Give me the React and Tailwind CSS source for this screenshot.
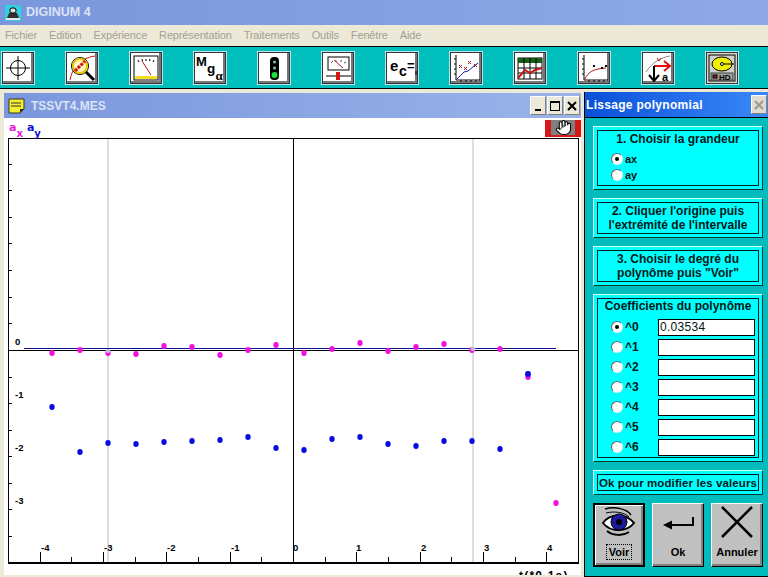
import React from 'react'
import { Hand } from 'lucide-react'

const menus = ['Fichier', 'Edition', 'Expérience', 'Représentation', 'Traitements', 'Outils', 'Fenêtre', 'Aide']

const magenta = [[52,353],[80,350],[108,353],[136,354],[164,346],[192,347],[220,355],[248,350],[276,345],[304,353],[332,349],[360,343],[388,351],[416,347],[444,344],[472,350],[500,349],[528,377],[556,503]]
const blue = [[52,407],[80,452],[108,443],[136,444],[164,442],[192,441],[220,440],[248,437],[276,448],[304,450],[332,439],[360,437],[388,444],[416,446],[444,441],[472,441],[500,449],[528,374]]
const majorX = [[40,'-4',41],[103,'-3',104],[166,'-2',167],[230,'-1',231],[293,'0',293],[356,'1',356],[420,'2',421],[483,'3',484],[546,'4',547]]
const minorX = [71,135,198,261,325,388,451,515]
const leftTicks = [164,190,217,243,270,297,323,350,377,403,430,456,483,509,536]
const leftLabels = [['0',15,345],['-1',15,398],['-2',15,451],['-3',15,504]]
const coefs = ['^0','^1','^2','^3','^4','^5','^6']

const IconTarget = () => (
  <svg width="28" height="28" viewBox="0 0 28 28" fill="none" stroke="#000" strokeWidth="1">
    <circle cx="14" cy="14" r="7.5" />
    <path d="M14 2v24M2 14h24" />
  </svg>
)

const IconLoupe = () => (
  <svg width="28" height="28" viewBox="0 0 28 28" fill="none">
    <path d="M2 26C4 14 12 4 27 2" stroke="#c01818" strokeWidth="1" />
    <circle cx="12" cy="12" r="8.5" stroke="#000" strokeWidth="1" fill="#fff8c0" />
    <circle cx="12" cy="12" r="7" stroke="#e8c800" strokeWidth="2" />
    <path d="M7 17L17 7" stroke="#d01818" strokeWidth="3" strokeDasharray="3 1" />
    <path d="M18 18l8 8" stroke="#000" strokeWidth="3" />
  </svg>
)

const IconMeter = () => (
  <svg width="28" height="28" viewBox="0 0 28 28" fill="none">
    <rect x="2" y="2" width="24" height="24" fill="#fff" stroke="#000" />
    <path d="M6 6l1 2M10 5l.5 2M14 5v2M18 5l-.5 2M22 6l-1 2" stroke="#000" />
    <path d="M10 7l9 14" stroke="#c01818" />
    <rect x="3" y="22" width="22" height="3" fill="#f0e020" />
  </svg>
)

const IconMg = () => (
  <svg width="30" height="30" viewBox="0 0 30 30">
    <text x="1" y="13" fontFamily="Liberation Sans" fontWeight="700" fontSize="13">M</text>
    <text x="12" y="20" fontFamily="Liberation Sans" fontWeight="700" fontSize="13.5">g</text>
    <text x="20.5" y="27" fontFamily="Liberation Serif" fontWeight="700" fontSize="13">α</text>
  </svg>
)

const IconLight = () => (
  <svg width="28" height="28" viewBox="0 0 28 28">
    <rect x="10" y="3" width="9" height="23" rx="4" fill="#000" />
    <circle cx="14.5" cy="8" r="1.5" fill="#7fc0c0" />
    <circle cx="14.5" cy="14" r="1.5" fill="#7fc0c0" />
    <circle cx="14.5" cy="21" r="3" fill="#20e040" />
  </svg>
)

const IconGauge = () => (
  <svg width="28" height="28" viewBox="0 0 28 28" fill="none">
    <rect x="4" y="3" width="21" height="13" fill="#fff" stroke="#000" />
    <path d="M7 9l2-2M12 6v2M17 6v2M22 8l-2 1" stroke="#555" />
    <path d="M10 6l9 8" stroke="#c01818" />
    <path d="M2 22h25" stroke="#000" />
    <rect x="12" y="18" width="4" height="8" fill="#d01818" />
  </svg>
)

const IconEc = () => (
  <svg width="30" height="30" viewBox="0 0 30 30">
    <text x="3" y="18" fontFamily="Liberation Sans" fontWeight="700" fontSize="15">e</text>
    <text x="12" y="23" fontFamily="Liberation Sans" fontWeight="700" fontSize="14">c</text>
    <text x="20" y="17" fontFamily="Liberation Sans" fontWeight="700" fontSize="13">=</text>
    <path d="M29 18v4" stroke="#000" />
  </svg>
)

const IconScatter = () => (
  <svg width="28" height="28" viewBox="0 0 28 28" fill="none">
    <path d="M4 1v25h24" stroke="#000" />
    <path d="M2 5h2M2 10h2M2 15h2M2 20h2M9 26v2M14 26v2M19 26v2M24 26v2" stroke="#000" />
    <path d="M5 25L12 18l4-1 6-5 4-3" stroke="#1818c0" />
    <path d="M7 11l3 3M10 11l-3 3M12 13l3 3M15 13l-3 3M16 7l3 3M19 7l-3 3M22 10l3 3M25 10l-3 3" stroke="#a02020" />
  </svg>
)

const IconTable = () => (
  <svg width="28" height="28" viewBox="0 0 28 28" fill="none">
    <rect x="2" y="4" width="24" height="21" fill="#fff" stroke="#000" />
    <rect x="2" y="4" width="24" height="5" fill="#146014" />
    <path d="M2 14h24M2 19h24M8 4v21M14 4v21M20 4v21" stroke="#000" />
    <path d="M2 24l7-8 5 3 5-3 7-2" stroke="#c01818" strokeWidth="2" />
  </svg>
)

const IconCurve = () => (
  <svg width="28" height="28" viewBox="0 0 28 28" fill="none">
    <path d="M4 1v25h24" stroke="#000" />
    <path d="M2 5h2M2 10h2M2 15h2M2 20h2M9 26v2M14 26v2M19 26v2M24 26v2" stroke="#000" />
    <path d="M5 25c3-7 8-10 21-11" stroke="#b01818" />
    <rect x="13" y="11" width="2" height="2" fill="#000" />
    <rect x="21" y="13" width="2" height="2" fill="#000" />
    <rect x="25" y="11" width="2" height="2" fill="#000" />
  </svg>
)

const IconVector = () => (
  <svg width="30" height="30" viewBox="0 0 30 30" fill="none">
    <path d="M3 19C9 10 16 5 27 3" stroke="#888" />
    <path d="M14 5l2 3 2-3" stroke="#d01818" />
    <path d="M11 13h15M21 8l6 5-6 5" stroke="#e01010" strokeWidth="2" />
    <path d="M11 13v14M6 22l5 6 5-6" stroke="#000" strokeWidth="2" />
    <text x="19" y="28" fontFamily="Liberation Sans" fontWeight="700" fontSize="11" fill="#000">a</text>
  </svg>
)

const IconDisk = () => (
  <svg width="30" height="30" viewBox="0 0 30 30" fill="none">
    <rect x="0" y="0" width="30" height="30" fill="#d8d8d0" />
    <rect x="2" y="2" width="26" height="26" fill="#d0d0c8" stroke="#000" />
    <ellipse cx="15" cy="11" rx="10" ry="7" fill="#f0f000" stroke="#000" />
    <circle cx="15" cy="11" r="1.5" fill="#fff" stroke="#000" />
    <path d="M17 11h10" stroke="#000" />
    <rect x="4" y="20" width="22" height="7" fill="#a0a0a0" stroke="#404040" />
    <rect x="6" y="22" width="4" height="3" fill="#802020" stroke="#000" />
    <text x="12" y="26.5" fontFamily="Liberation Sans" fontWeight="700" fontSize="8" fill="#000">HD</text>
  </svg>
)

const toolIcons = [IconTarget, IconLoupe, IconMeter, IconMg, IconLight, IconGauge, IconEc, IconScatter, IconTable, IconCurve, IconVector, IconDisk]

const ToolButton = ({ Icon }) => (
  <div className="w-[32px] h-[32px] flex items-center justify-center overflow-hidden bg-white border border-[#333] shadow-[0_0_0_1px_#b8e8e8,inset_-2px_-2px_0_#777]">
    <Icon />
  </div>
)

const Radio = ({ checked }) => (
  <span className="w-[12px] h-[12px] shrink-0 rounded-full bg-white border border-t-[#666] border-l-[#666] border-r-[#eee] border-b-[#eee] flex items-center justify-center">
    {checked && <span className="w-[4px] h-[4px] rounded-full bg-black" />}
  </span>
)

const Group = ({ className, children }) => (
  <div className={`border border-t-[#d8ffff] border-l-[#d8ffff] border-r-[#003838] border-b-[#003838] bg-[#00ffff] p-[3px] ${className}`}>
    <div className="border border-[#002020] h-full">{children}</div>
  </div>
)

const WinButton = ({ children }) => (
  <div className="w-[16px] h-[19px] bg-[#ece9d8] border border-t-white border-l-white border-r-[#808080] border-b-[#808080] flex items-center justify-center">
    {children}
  </div>
)

const Chart = () => (
  <svg className="block" width="572" height="426" viewBox="8 138 572 426">
    <rect x="8" y="138" width="572" height="426" fill="#fff" />
    <path d="M108 138v425M473 138v425" stroke="#bdbdbd" />
    <path d="M293.5 138v425" stroke="#000" />
    <path d="M8 350.5h571" stroke="#000" />
    <path d="M24 348.5h532" stroke="#10108a" />
    <path d="M8.5 138v425M8 138.5h571M578.5 138v425" stroke="#000" />
    <path d="M8 563h571" stroke="#000" strokeWidth="2" />
    {leftTicks.map((y) => <path key={y} d={`M8 ${y}.5h4`} stroke="#000" />)}
    {majorX.map(([x]) => <path key={x} d={`M${x}.5 552v11`} stroke="#000" />)}
    {minorX.map((x) => <path key={x} d={`M${x}.5 557v6`} stroke="#000" />)}
    <g fontFamily="Liberation Sans" fontWeight="700" fontSize="9.5" fill="#000">
      {majorX.map(([x, t, lx]) => <text key={x} x={lx} y="551">{t}</text>)}
      {leftLabels.map(([t, x, y]) => <text key={t} x={x} y={y}>{t}</text>)}
    </g>
    {blue.map(([x, y]) => <ellipse key={`b${x}`} cx={x} cy={y} rx="2.7" ry="3" fill="#0a0ae0" />)}
    {magenta.map(([x, y]) => <ellipse key={`m${x}`} cx={x} cy={y} rx="2.7" ry="3" fill="#f010e0" />)}
    <ellipse cx="528" cy="374" rx="2.7" ry="3" fill="#0a0ae0" />
    <ellipse cx="108" cy="351" rx="2.5" ry="2" fill="#c0c0d8" />
    <ellipse cx="473" cy="349" rx="2.5" ry="2" fill="#c0c0d8" />
  </svg>
)

export default function App() {
  return (
    <div className="w-[768px] h-[577px] overflow-hidden flex flex-col bg-[#ece9d8] font-['Liberation_Sans',sans-serif]">
      <div className="h-[25px] shrink-0 bg-gradient-to-r from-[#7b97dc] to-[#8ea9e6] flex items-center pl-[5px] gap-[5px]">
        <svg width="16" height="16" viewBox="0 0 16 16">
          <rect width="16" height="16" fill="#30d0e0" />
          <path d="M2 13l2-5h8l2 5z" fill="#303030" />
          <rect x="5" y="3" width="6" height="5" rx="2" fill="#e0e0e0" stroke="#000" />
          <rect x="1" y="13" width="14" height="2" fill="#e8e8e8" />
        </svg>
        <span className="text-[12.5px] font-bold text-[#dbe3f6]">DIGINUM 4</span>
      </div>

      <div className="h-[21px] shrink-0 flex items-center pl-[5px] gap-[12px] text-[11px] tracking-[-0.15px] text-[#a3a193]">
        {menus.map((m) => <span key={m}>{m}</span>)}
      </div>

      <div className="h-[43px] shrink-0 bg-[#00bebe] border-y border-black flex items-center gap-[32px] pl-[2px]">
        {toolIcons.map((Icon, i) => <ToolButton key={i} Icon={Icon} />)}
      </div>

      <div className="flex-1 flex min-h-0">
        <div className="w-[581px] pl-[4px] pt-[4px] pb-[2px] flex flex-col">
          <div className="h-[25px] shrink-0 bg-gradient-to-r from-[#7b97dc] to-[#9ab3ea] flex items-center pl-[4px]">
            <svg width="17" height="17" viewBox="0 0 17 17">
              <path d="M1 2h15v10l-4 4H1z" fill="#f4ee30" stroke="#333" />
              <path d="M3 6h10M3 9h10" stroke="#333" />
              <path d="M12 16l4-4h-4z" fill="#333" />
            </svg>
            <span className="ml-[6px] text-[12px] font-bold text-[#dbe3f6]">TSSVT4.MES</span>
            <div className="ml-auto flex items-center gap-[1px] pr-[1px]">
              <WinButton><span className="w-[6px] h-[2px] bg-black mt-[8px]" /></WinButton>
              <WinButton><span className="w-[10px] h-[10px] border border-black border-t-2" /></WinButton>
              <WinButton>
                <svg width="10" height="10" viewBox="0 0 10 10"><path d="M1 1l8 8M9 1l-8 8" stroke="#000" strokeWidth="2" /></svg>
              </WinButton>
            </div>
          </div>

          <div className="flex-1 bg-white flex flex-col min-h-0">
            <div className="h-[20px] shrink-0 flex items-start pl-[5px] pt-[4px] font-['DejaVu_Sans',sans-serif] text-[11px] leading-[11px] font-bold">
              <span className="text-[#e818d8]">a<sub className="text-[10px] align-[-3px] leading-none">x</sub></span>
              <span className="ml-[4px] text-[#1010d0]">a<sub className="text-[10px] align-[-3px] leading-none">y</sub></span>
              <div className="ml-auto mt-[-2px] w-[36px] h-[17px] bg-[#d81818] flex justify-center">
                <div className="w-[24px] h-[15px] bg-[#808080] flex items-center justify-center">
                  <Hand size={17} color="#000" fill="#fff" strokeWidth={1.5} />
                </div>
              </div>
            </div>
            <div className="pl-[4px]"><Chart /></div>
            <div className="h-[11px] shrink-0 relative overflow-hidden">
              <span className="absolute left-[515px] top-[5px] text-[12px] leading-[14px] font-bold tracking-[1.2px]">t(*0.1s)</span>
            </div>
          </div>
        </div>

        <div className="w-[3px] bg-[#ece9d8]" />

        <div className="w-[184px] pt-[3px] flex flex-col">
          <div className="flex-1 flex flex-col border-l border-b border-black bg-[#00bcbc] min-h-0">
            <div className="h-[26px] shrink-0 border-b border-black bg-gradient-to-r from-[#0a50d8] to-[#3a88f8] flex items-center pl-[1px]">
              <span className="text-[12px] font-bold text-white tracking-[0.3px]">Lissage polynomial</span>
              <div className="ml-auto mr-[1px] w-[16px] h-[19px] bg-[#e0ddd0] border border-t-white border-l-white border-r-[#808080] border-b-[#808080] flex items-center justify-center">
                <svg width="10" height="10" viewBox="0 0 10 10"><path d="M1 1l8 8M9 1l-8 8" stroke="#9a9a90" strokeWidth="2" /></svg>
              </div>
            </div>

            <div className="flex flex-col pl-[8px] pr-[5px] pt-[8px] gap-[8px] text-[12px] leading-[14px] font-bold text-[#001818] text-center">
              <Group className="h-[64px]">
                <div className="pt-[1px]">1. Choisir la grandeur</div>
                <div className="flex flex-col items-start pl-[13px] pt-[7px] gap-[4px] text-[11px] leading-[12px]">
                  <label className="flex items-center gap-[2px]"><Radio checked />ax</label>
                  <label className="flex items-center gap-[2px]"><Radio />ay</label>
                </div>
              </Group>
              <Group className="h-[40px]">
                <div className="pt-[1px]">2. Cliquer l'origine puis<br />l'extrémité de l'intervalle</div>
              </Group>
              <Group className="h-[40px]">
                <div className="pt-[1px]">3. Choisir le degré du<br />polynôme puis "Voir"</div>
              </Group>
              <Group className="h-[168px]">
                <div className="text-[12px]">Coefficients du polynôme</div>
                <div className="flex flex-col gap-[4px] pl-[13px] pt-[6px] text-[12px]">
                  {coefs.map((c, i) => (
                    <div key={c} className="flex items-center h-[16px]">
                      <Radio checked={i === 0} />
                      <span className="ml-[2px] w-[33px] text-left">{c}</span>
                      <div className="w-[97px] h-[17px] bg-white border border-black text-left pl-[1px] text-[12px] leading-[15px] font-normal tracking-[0.3px]">
                        {i === 0 ? '0.03534' : ''}
                      </div>
                    </div>
                  ))}
                </div>
              </Group>
              <Group className="h-[25px]">
                <div className="text-[11.5px] leading-[16px] whitespace-nowrap tracking-[0.1px]">Ok pour modifier les valeurs</div>
              </Group>

              <div className="flex justify-between text-[11px] text-black">
                <div className="w-[52px] h-[64px] bg-[#c0c0c0] border-2 border-black flex flex-col items-center shadow-[inset_1px_1px_0_#fff,inset_-2px_-2px_0_#808080]">
                  <svg width="36" height="32" viewBox="0 0 36 32" className="mt-[1px]" fill="none">
                    <path d="M4 3c10-3 22 0 26 6" stroke="#000" strokeWidth="1.5" />
                    <path d="M5 7c8-2 18-1 23 4" stroke="#000" />
                    <path d="M2 17C8 8 24 6 33 17C26 26 10 27 2 17z" fill="#fff" stroke="#000" strokeWidth="2" />
                    <circle cx="18" cy="16" r="8" fill="#1a1a9a" stroke="#000" />
                    <circle cx="18" cy="16" r="3" fill="#000" />
                    <path d="M6 25c6 5 16 5 22 1" stroke="#000" strokeWidth="2" />
                  </svg>
                  <span className="mt-[6px] px-[2px] border border-dotted border-black leading-[14px]">Voir</span>
                </div>
                <div className="w-[52px] h-[64px] bg-[#c0c0c0] border border-t-white border-l-white border-r-black border-b-black flex flex-col items-center shadow-[inset_-2px_-2px_0_#808080]">
                  <svg width="36" height="32" viewBox="0 0 36 32" className="mt-[3px]" fill="none">
                    <path d="M33 10v8H8" stroke="#000" strokeWidth="2" />
                    <path d="M3 18l9-4.5v9z" fill="#000" />
                  </svg>
                  <span className="mt-[6px] leading-[14px]">Ok</span>
                </div>
                <div className="w-[52px] h-[64px] bg-[#c0c0c0] border border-t-white border-l-white border-r-black border-b-black flex flex-col items-center shadow-[inset_-2px_-2px_0_#808080]">
                  <svg width="36" height="36" viewBox="0 0 36 36" className="mt-[1px]" fill="none">
                    <path d="M3 2l30 30M33 2L3 32" stroke="#000" strokeWidth="2.5" />
                  </svg>
                  <span className="mt-[4px] leading-[14px]">Annuler</span>
                </div>
              </div>
            </div>
          </div>
        </div>
      </div>
    </div>
  )
}
